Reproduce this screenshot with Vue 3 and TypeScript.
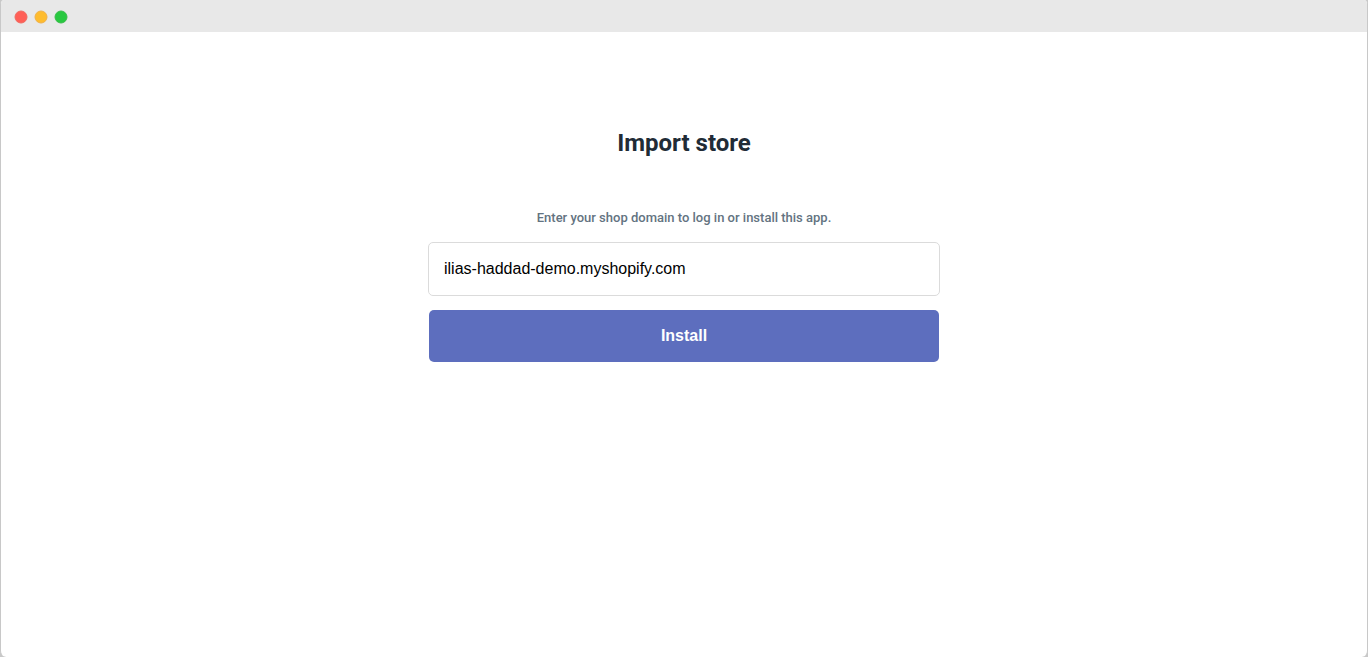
<script setup lang="ts">
import { ref } from 'vue'

const shop = ref<string>('ilias-haddad-demo.myshopify.com')
</script>

<template>
  <div class="window">
    <header class="titlebar">
      <svg width="54" height="14" viewBox="0 0 54 14" aria-hidden="true">
        <circle cx="7" cy="7" r="6" fill="#ff5f57" stroke="#ee6a60" />
        <circle cx="27" cy="7" r="6" fill="#febc2e" stroke="#eeb04a" />
        <circle cx="47" cy="7" r="6" fill="#28c840" stroke="#3abb4b" />
      </svg>
    </header>
    <main class="content">
      <h1>Import store</h1>
      <form class="form" @submit.prevent>
        <label for="shop">Enter your shop domain to log in or install this app.</label>
        <input id="shop" v-model="shop" type="text" name="shop" spellcheck="false" />
        <button type="submit">Install</button>
      </form>
    </main>
  </div>
</template>

<style>
body {
  margin: 0;
  background: #c8c8c8;
}
</style>

<style scoped>
.window {
  box-sizing: border-box;
  min-height: 100vh;
  border: 1px solid #c8c8c8;
  border-width: 0 1px;
  border-radius: 4px 4px 6px 6px;
  background: #fff;
  overflow: hidden;
  font-family: Roboto, "Liberation Sans", sans-serif;
}
.titlebar {
  display: flex;
  align-items: center;
  box-sizing: border-box;
  height: 32px;
  padding: 2px 13px 0;
  background: #e8e8e8;
}
.content {
  max-width: 512px;
  margin: 0 auto;
  padding: 96px 16px 32px;
  text-align: center;
}
h1 {
  margin: 0 0 48px;
  color: #212b36;
  font-size: 24px;
  line-height: 30px;
  font-weight: 700;
}
.form {
  display: flex;
  flex-direction: column;
}
label {
  margin-bottom: 12px;
  color: #637381;
  font-size: 13px;
  line-height: 24px;
  font-weight: 500;
}
input {
  box-sizing: border-box;
  width: 100%;
  height: 54px;
  margin: 0 0 14px;
  padding: 0 15px;
  border: 1px solid #dbdbdb;
  border-radius: 5px;
  background: #fff;
  color: #000;
  font: 16px "Liberation Sans", sans-serif;
}
button {
  height: 52px;
  margin: 0 1px;
  border: 0;
  border-radius: 5px;
  background: #5d6ebe;
  color: #fff;
  font: 700 16px "Liberation Sans", sans-serif;
}
</style>
